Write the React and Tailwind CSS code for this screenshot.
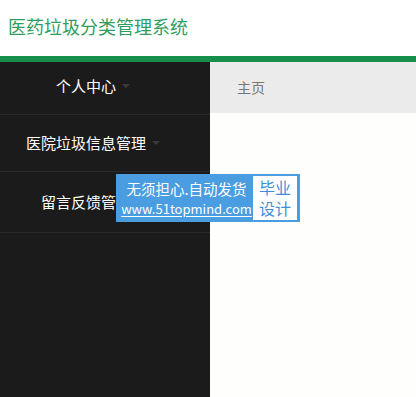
export default function App() {
  const font = { fontFamily: '"Noto Sans CJK SC", "Noto Sans", sans-serif' };
  const Caret = () => (
    <span className="ml-[6px] inline-block h-0 w-0 border-x-[4px] border-t-[4px] border-x-transparent border-t-[#3a3a3a]" />
  );
  return (
    <div className="relative h-[397px] w-[416px] overflow-hidden bg-white" style={font}>
      <div className="flex h-[56px] items-center bg-white pb-1 pl-[8px]">
        <span className="text-[18px] leading-none text-[#2f9d5c]">医药垃圾分类管理系统</span>
      </div>
      <div className="h-[6px] bg-[#168f4c]" />
      <div className="flex h-[335px]">
        <div className="flex w-[210px] flex-col bg-[#1b1b1b]">
          <div className="flex h-[53px] items-center justify-center border-b border-[#2a2a2c] pb-1 pr-6 text-[15px] text-white">
            个人中心<Caret />
          </div>
          <div className="flex h-[57px] items-center justify-center border-b border-[#2a2a2c] pr-6 text-[15px] text-white">
            医院垃圾信息管理<Caret />
          </div>
          <div className="flex h-[61px] items-center justify-center border-b border-[#2a2a2c] pr-6 text-[15px] text-white">
            留言反馈管理<Caret />
          </div>
        </div>
        <div className="flex flex-1 flex-col">
          <div className="flex h-[51px] items-center bg-[#ebebeb] pl-[27px] text-[14px] text-[#777]">主页</div>
          <div className="flex-1 bg-[#fefefd]" />
        </div>
      </div>
      <div className="absolute left-[116px] top-[174px] flex h-[48px] w-[184px] items-center bg-[#4a9de0] pl-[4px] pr-[3px]">
        <div className="flex flex-1 flex-col items-center text-white">
          <span className="text-[14.5px] leading-[21px]">无须担心.自动发货</span>
          <span className="text-[13px] leading-[20px] underline underline-offset-2">www.51topmind.com</span>
        </div>
        <div className="flex h-[44px] w-[44px] items-center justify-center bg-white text-center text-[16px] leading-[21px] text-[#3f8fd6]">
          <span>毕业<br />设计</span>
        </div>
      </div>
    </div>
  );
}
